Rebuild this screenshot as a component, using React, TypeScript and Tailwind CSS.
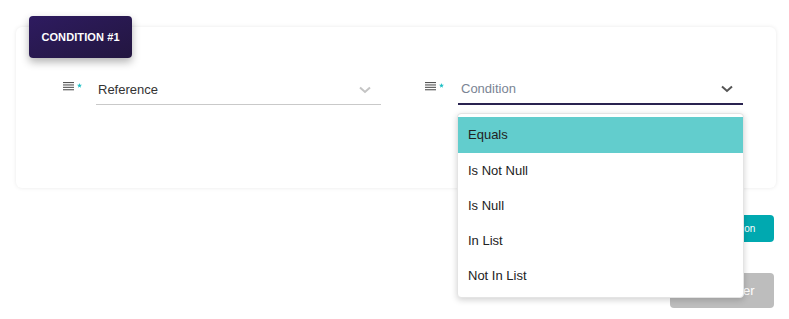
import { useState } from 'react'

const options = ['Equals', 'Is Not Null', 'Is Null', 'In List', 'Not In List']

function ListIcon() {
  return (
    <div className="flex items-start w-[33px] pt-[7px] pl-0">
      <svg width="12" height="10" viewBox="0 0 12 10">
        <rect x="0" y="0" width="11" height="1.1" fill="#555" />
        <rect x="0" y="2.4" width="11" height="1.1" fill="#555" />
        <rect x="0" y="4.8" width="11" height="1.1" fill="#555" />
        <rect x="0" y="7.2" width="11" height="1.1" fill="#555" />
      </svg>
      <svg width="5" height="5" viewBox="0 0 10 10" className="ml-[2px] mt-[1px]">
        <path d="M5 0 L6.2 3.5 L10 3.6 L7 5.9 L8.1 9.6 L5 7.4 L1.9 9.6 L3 5.9 L0 3.6 L3.8 3.5 Z" fill="#20c0c6" />
      </svg>
    </div>
  )
}

function Chevron({ color }: { color: string }) {
  return (
    <svg width="12" height="8" viewBox="0 0 12 8">
      <path d="M1 1.5 L6 6 L11 1.5" fill="none" stroke={color} strokeWidth="2" />
    </svg>
  )
}

export default function App() {
  const [selected] = useState('Equals')

  return (
    <div className="w-[789px] h-[319px] bg-white overflow-hidden font-['Liberation_Sans',Arial,sans-serif] pt-[27px] pl-[16px]">
      <div className="relative w-[760px] h-[161px] rounded-[6px] bg-white shadow-[0_0_4px_rgba(0,0,0,0.09)]">
        {/* Badge */}
        <div className="absolute left-[13px] top-[-11px] w-[103px] h-[42px] rounded-[4px] bg-gradient-to-br from-[#2e1b60] to-[#231640] shadow-[0_4px_8px_rgba(0,0,0,0.3)] flex items-center justify-center">
          <span className="text-white text-[11px] font-bold tracking-[0.1px]">CONDITION #1</span>
        </div>

        <div className="flex pl-[47px] pt-[48px] gap-[44px]">
          {/* Reference field */}
          <div className="flex w-[318px]">
            <ListIcon />
            <div className="flex-1 h-[30px] flex items-center justify-between border-b border-[#c9c9c9] pl-[2px] pr-[10px]">
              <span className="text-[13px] text-[#333]">Reference</span>
              <Chevron color="#c4c4c4" />
            </div>
          </div>

          {/* Condition field */}
          <div className="relative flex w-[318px]">
            <ListIcon />
            <div className="flex-1 h-[30px] flex items-center justify-between border-b-2 border-[#2a2350] pl-[3px] pr-[10px] mb-[2px]">
              <span className="text-[13px] text-[#7a8494]">Condition</span>
              <Chevron color="#555" />
            </div>

            {/* Dropdown menu */}
            <div className="absolute z-10 left-[32px] top-[38px] w-[287px] bg-white rounded-[4px] border border-[#e4e4e4] shadow-[0_2px_6px_rgba(0,0,0,0.18)] pt-[3px] pb-[4px]">
              {options.map((o) => (
                <div
                  key={o}
                  className={
                    'flex items-center pl-[10px] text-[13px] text-[#222] ' +
                    (o === selected ? 'bg-[#62cdcd] h-[36px]' : 'bg-white h-[35px]')
                  }
                >
                  {o}
                </div>
              ))}
            </div>
          </div>
        </div>
      </div>

      <div className="w-[758px] flex flex-col items-end">
        <button className="mt-[27px] h-[27px] w-[100px] rounded-[4px] bg-[#00a9b0] text-white text-[10px]">
          Add Condition
        </button>
        <button className="mt-[31px] h-[35px] w-[104px] rounded-[4px] bg-[#bdbdbd] text-white text-[13px]">
          Apply Filter
        </button>
      </div>
    </div>
  )
}
